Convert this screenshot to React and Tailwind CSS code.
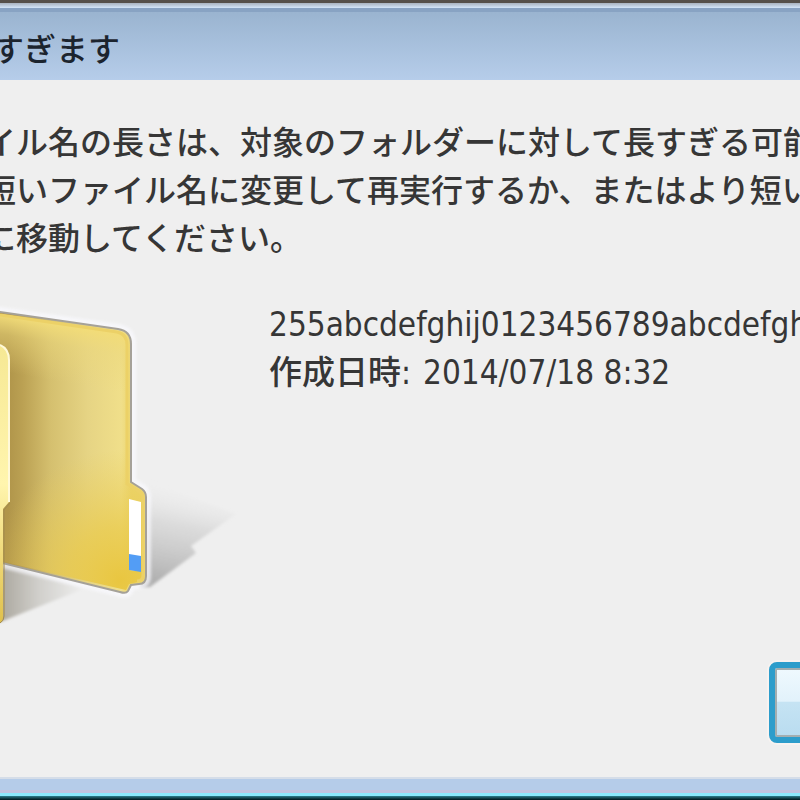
const MESSAGE_LINES = [
  'イル名の長さは、対象のフォルダーに対して長すぎる可能',
  '短いファイル名に変更して再実行するか、またはより短い',
  'に移動してください。'
];

const FILE = {
  name: '255abcdefghij0123456789abcdefghij',
  createdLabel: '作成日時:',
  created: '2014/07/18 8:32'
};

function FolderIcon() {
  return (
    <svg viewBox="0 301 250 340" className="block h-[340px] w-[250px]" aria-hidden="true">
      <defs>
        <linearGradient id="back" gradientUnits="userSpaceOnUse" x1="8" y1="450" x2="131" y2="450">
          <stop offset="0" stopColor="#b0954a" />
          <stop offset="0.12" stopColor="#bba153" />
          <stop offset="0.35" stopColor="#d5c06f" />
          <stop offset="0.65" stopColor="#e6d484" />
          <stop offset="0.92" stopColor="#f0df8a" />
          <stop offset="1" stopColor="#ecd56e" />
        </linearGradient>
        <linearGradient id="topLight" gradientUnits="userSpaceOnUse" x1="14" y1="316" x2="4" y2="372">
          <stop offset="0" stopColor="#f2dc78" />
          <stop offset="0.35" stopColor="#ecd87c" stopOpacity="0.5" />
          <stop offset="1" stopColor="#ecd87c" stopOpacity="0" />
        </linearGradient>
        <radialGradient id="corner" gradientUnits="userSpaceOnUse" cx="120" cy="580" r="130">
          <stop offset="0" stopColor="#e9c640" />
          <stop offset="0.4" stopColor="#e9ca4c" stopOpacity="0.75" />
          <stop offset="1" stopColor="#e9cd5a" stopOpacity="0" />
        </radialGradient>
        <linearGradient id="front" x1="0" y1="0" x2="0" y2="1">
          <stop offset="0" stopColor="#f6e894" />
          <stop offset="0.5" stopColor="#fff5ae" />
          <stop offset="0.75" stopColor="#f0da7a" />
          <stop offset="1" stopColor="#e0c04c" />
        </linearGradient>
        <linearGradient id="shadowRight" gradientUnits="userSpaceOnUse" x1="185" y1="485" x2="165" y2="582">
          <stop offset="0" stopColor="#efefef" stopOpacity="0" />
          <stop offset="0.4" stopColor="#cfcfcf" stopOpacity="0.6" />
          <stop offset="1" stopColor="#b0b0b0" />
        </linearGradient>
        <linearGradient id="shadowLeft" gradientUnits="userSpaceOnUse" x1="0" y1="600" x2="85" y2="600">
          <stop offset="0" stopColor="#aaa69d" />
          <stop offset="0.45" stopColor="#d0cfcb" />
          <stop offset="1" stopColor="#efefef" />
        </linearGradient>
        <filter id="soft" x="-20%" y="-20%" width="140%" height="140%">
          <feGaussianBlur stdDeviation="1.4" />
        </filter>
      </defs>

      {/* Cast shadows */}
      <path d="M140 478 L236 514 L191 546 L196 553 L150 587 L140 587 Z" fill="url(#shadowRight)" filter="url(#soft)" />
      <path d="M0 562 L86 588 L0 622 Z" fill="url(#shadowLeft)" filter="url(#soft)" />

      {/* Back panel */}
      <path
        d="M-6 311 L0 312 L118 329 Q131 331 131 344 V482 L142 489 Q146 492 146 497 V576 Q146 584 139 584 L131 585 L128 591 Q126 594 120 592 L-6 561 Z"
        fill="none"
        stroke="#fafaff"
        strokeWidth="10"
        opacity="0.7"
        filter="url(#soft)"
      />
      <path
        d="M-6 311 L0 312 L118 329 Q131 331 131 344 V482 L142 489 Q146 492 146 497 V576 Q146 584 139 584 L131 585 L128 591 Q126 594 120 592 L-6 561 Z"
        fill="url(#back)"
        stroke="#a5a198"
        strokeWidth="2"
      />
      <path d="M0 314 L118 331 Q129 333 129 345 V484 L126 588 L0 560 Z" fill="url(#topLight)" />
      <path d="M0 440 H129 V483 L141 491 Q144 493 144 498 V575 Q144 582 138 582 L129 584 L126 590 L0 561 Z" fill="url(#corner)" />
      <path d="M0 315 L117 332 Q127 334 127 345 V484 L140 492 Q143 494 143 498 V575 Q143 581 137 581" fill="none" stroke="#ecd167" strokeWidth="3" />

      {/* Label slot on the edge */}
      <path d="M129 499 L141 502 V571 L129 570 Z" fill="#ffffff" />
      <path d="M129 554 L141 556 V572 L129 570 Z" fill="#539df5" />

      {/* Front panel */}
      <path d="M0 345 Q9 349 9 360 V502 L3 509 V616 Q3 622 0 623 Z" fill="url(#front)" />
      <path d="M0 345 Q9 349 9 360 V502" fill="none" stroke="#fff9d8" strokeWidth="2" />
      <path d="M10 503 L4 510 V616 Q4 621 0 623" fill="none" stroke="#a18a4e" strokeWidth="1" />
    </svg>
  );
}

export default function App() {
  return (
    <div className="flex min-h-screen flex-col overflow-hidden bg-[#efefef] font-['DejaVu_Sans_Condensed','Noto_Sans_CJK_JP',sans-serif] font-medium text-[#363636]">
      {/* Title bar */}
      <header className="border-t-[3px] border-[#55504a]">
        <div className="h-[5px] bg-gradient-to-b from-[#a9b3bf] to-[#d3e6fa]" />
        <div className="flex h-[72px] items-center overflow-hidden border-t-4 border-[#88a3c3] bg-gradient-to-b from-[#9ab4d0] to-[#b6cdea] pt-2">
          <h1 className="-ml-2 whitespace-nowrap text-[32px] leading-[48px] text-[#1c242e]">すぎます</h1>
        </div>
      </header>

      <main className="flex grow flex-col overflow-hidden pt-[39px] pb-[34px]">
        <p className="-ml-4 whitespace-nowrap text-[32px] leading-[48px]">
          {MESSAGE_LINES.map((line) => (
            <span key={line} className="block">{line}</span>
          ))}
        </p>

        <div className="mt-[38px] flex">
          <div className="w-[269px] shrink-0">
            <FolderIcon />
          </div>
          <div className="min-w-0 whitespace-nowrap text-[33px] leading-[48px]">
            <p>{FILE.name}</p>
            <p className="flex gap-3">
              <span>{FILE.createdLabel}</span>
              <span>{FILE.created}</span>
            </p>
          </div>
        </div>

        <div className="mt-auto flex justify-end">
          <button
            type="button"
            aria-label="スキップ"
            className="-mr-[200px] h-[81px] w-[231px] rounded-lg border-[6px] border-[#2d9dcb] bg-[linear-gradient(#eff9fe,#e2f2fb_48%,#c5e3f3_50%,#b9dcf0)] ring-2 ring-[#f7f3f1] inset-ring-2 inset-ring-[#a3aeb0]"
          />
        </div>
      </main>

      {/* Window frame */}
      <footer>
        <div className="h-[13px] border-t-2 border-[#d5dde8] bg-[#b5cce9]" />
        <div className="h-[3px] bg-[#c3c5df]" />
        <div className="h-[3px] bg-[#8de9fa]" />
        <div className="h-1 bg-gradient-to-b from-[#2f7f8c] to-[#03181b]" />
      </footer>
    </div>
  );
}
